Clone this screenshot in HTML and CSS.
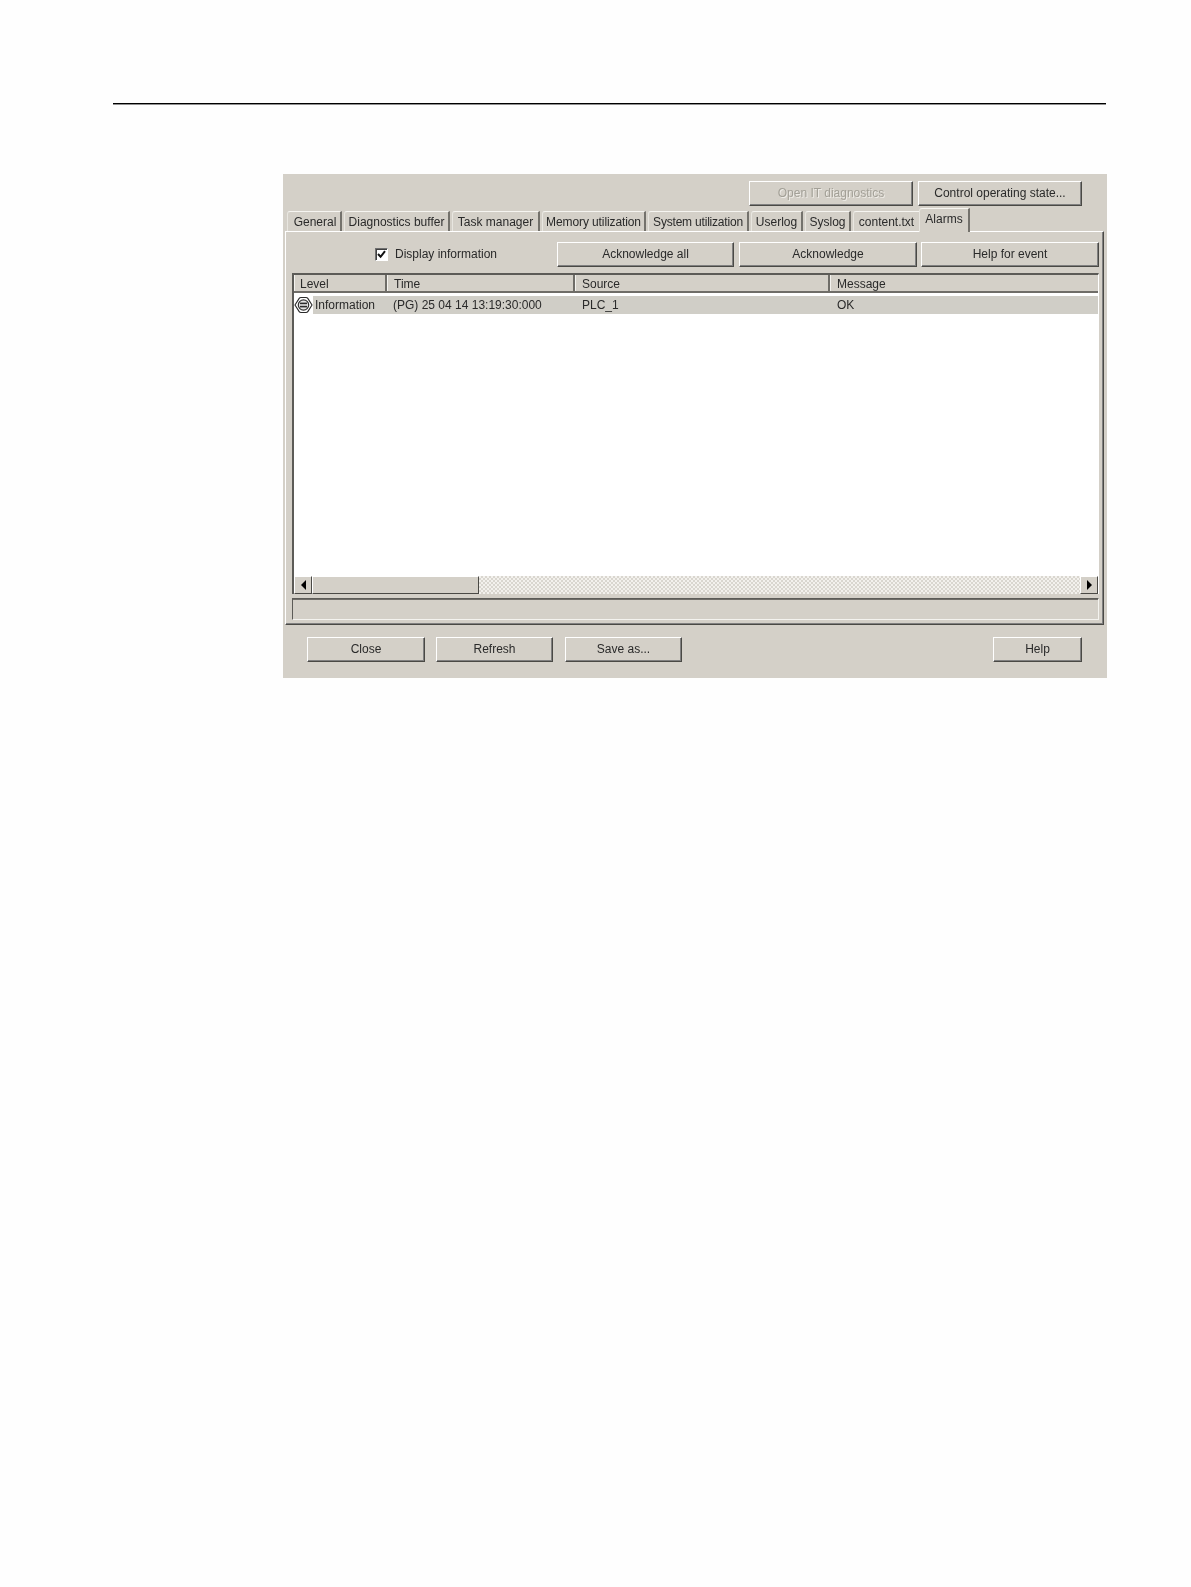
FILE: index.html
```html
<!DOCTYPE html>
<html lang="en">
<head>
<meta charset="utf-8">
<title>Alarms</title>
<link rel="stylesheet" href="styles.css">
</head>
<body>
<div class="rule"></div>
<div class="window">
  <div class="top-actions">
    <button class="btn btn-top btn-disabled">Open IT diagnostics</button>
    <button class="btn btn-top">Control operating state...</button>
  </div>
  <div class="tabs">
    <div class="tab tab-general">General</div>
    <div class="tab tab-diag">Diagnostics buffer</div>
    <div class="tab tab-task">Task manager</div>
    <div class="tab tab-memory">Memory utilization</div>
    <div class="tab tab-system">System utilization</div>
    <div class="tab tab-userlog">Userlog</div>
    <div class="tab tab-syslog">Syslog</div>
    <div class="tab tab-content">content.txt</div>
    <div class="tab tab-alarms">Alarms</div>
  </div>
  <div class="panel">
    <div class="panel-actions">
      <label class="check">
        <span class="check-box">
          <svg width="11" height="11" viewBox="0 0 11 11"><path d="M2 5 4.6 7.8 9 2.2" fill="none" stroke="#111" stroke-width="2"/></svg>
        </span>
        <span>Display information</span>
      </label>
      <button class="btn btn-ackall">Acknowledge all</button>
      <button class="btn btn-ack">Acknowledge</button>
      <button class="btn btn-ack">Help for event</button>
    </div>
    <div class="list">
      <div class="list-header">
        <div class="head-cell col-level">Level</div>
        <div class="head-cell col-time">Time</div>
        <div class="head-cell col-source">Source</div>
        <div class="head-cell col-message">Message</div>
      </div>
      <div class="list-row">
        <svg class="row-icon" width="19" height="18" viewBox="0 0 19 18">
          <path d="M1 9 5.2 2.4Q5.8 1.5 7 1.5H12Q13.2 1.5 13.8 2.4L18 9 13.8 15.6Q13.2 16.5 12 16.5H7Q5.8 16.5 5.2 15.6Z" fill="#fff" stroke="#2a2a2a" stroke-width="1.1"/>
          <circle cx="9.5" cy="9" r="5.2" fill="#e4e4e4" stroke="#333" stroke-width="1.2"/>
          <rect x="6" y="6.6" width="7" height="1.6" fill="#2a2a2a"/>
          <rect x="6" y="9.8" width="7" height="1.6" fill="#2a2a2a"/>
        </svg>
        <div class="row-body">
          <div class="row-cell row-level">Information</div>
          <div class="row-cell col-time row-time">(PG) 25 04 14 13:19:30:000</div>
          <div class="row-cell col-source">PLC_1</div>
          <div class="row-cell col-message">OK</div>
        </div>
      </div>
      <div class="list-fill"></div>
      <div class="scrollbar">
        <div class="scroll-btn"><span class="arrow-left"></span></div>
        <div class="scroll-thumb"></div>
        <div class="scroll-track"></div>
        <div class="scroll-btn"><span class="arrow-right"></span></div>
      </div>
    </div>
    <div class="status"></div>
  </div>
  <div class="bottom-actions">
    <button class="btn btn-close">Close</button>
    <button class="btn btn-wide">Refresh</button>
    <button class="btn btn-wide">Save as...</button>
    <button class="btn btn-help">Help</button>
  </div>
</div>
</body>
</html>
```
FILE: styles.css
```css
* { box-sizing: border-box; }
html, body { margin: 0; padding: 0; }
body {
  background: #fefefe;
  height: 1587px;
  overflow: hidden;
  font-family: "Liberation Sans", Arial, sans-serif;
  font-size: 12px;
  color: #2a2a2a;
}
.rule {
  height: 1px;
  margin: 103px 85px 0 113px;
  background: #000;
  box-shadow: 0 0.5px 0 #222;
}
.window {
  width: 824px;
  height: 504px;
  margin: 70px 0 0 283px;
  background: #d4d0c8;
  filter: blur(0.4px);
  display: flex;
  flex-direction: column;
}
.btn {
  display: block;
  height: 25px;
  padding: 0 0 2px;
  margin: 0;
  background: #d4d0c8;
  font: inherit;
  color: inherit;
  border: 1px solid;
  border-color: #fff #4a4945 #4a4945 #fff;
  box-shadow: inset -1px -1px 0 #808080;
}
.top-actions {
  display: flex;
  justify-content: flex-end;
  gap: 5px;
  padding: 7px 25px 0 0;
}
.btn-top { width: 164px; }
.btn-disabled { color: #a3a097; text-shadow: 1px 1px 0 #eeece7; }
.tabs {
  display: flex;
  align-items: flex-end;
  gap: 2px;
  height: 25px;
  padding-left: 4px;
}
.tab {
  height: 20px;
  line-height: 21px;
  text-align: center;
  white-space: nowrap;
  border-top: 1px solid #f6f5f1;
  border-left: 1px solid #e8e6e0;
  border-right: 2px solid #74726c;
  border-top-left-radius: 3px;
}
.tab-general { width: 55px; padding-left: 2px; }
.tab-diag { width: 106px; }
.tab-task { width: 88px; }
.tab-memory { width: 104px; letter-spacing: -0.1px; }
.tab-system { width: 101px; letter-spacing: -0.2px; }
.tab-userlog { width: 52px; }
.tab-syslog { width: 46px; }
.tab-content { width: 66px; border-right: none; }
.tab-alarms {
  width: 51px;
  height: 24px;
  line-height: 21px;
  margin-left: -2px;
  margin-bottom: -1px;
  background: #d4d0c8;
  position: relative;
  z-index: 1;
}
.panel {
  width: 819px;
  height: 394px;
  margin-left: 2px;
  padding: 10px 4px 0 6px;
  border: 1px solid;
  border-color: #fff #4a4945 #4a4945 #fff;
  box-shadow: inset -1px -1px 0 #808080;
  display: flex;
  flex-direction: column;
}
.panel-actions {
  display: flex;
  align-items: center;
  gap: 4px;
}
.check {
  display: flex;
  align-items: center;
  gap: 7px;
  margin-left: 83px;
  margin-right: auto;
  padding-bottom: 1px;
}
.check-box {
  width: 13px;
  height: 13px;
  display: flex;
  align-items: center;
  justify-content: center;
  background: #fff;
  border: 1px solid;
  border-color: #707070 #fff #fff #707070;
  box-shadow: inset 1px 1px 0 #404040;
}
.btn-ackall { width: 177px; margin-right: 1px; }
.btn-ack { width: 178px; }
.list {
  height: 321px;
  margin: 6px 0 0;
  background: #fff;
  border-top: 2px solid #5c5b57;
  border-left: 2px solid #5c5b57;
  border-right: 1px solid #fff;
  display: flex;
  flex-direction: column;
}
.list-header {
  display: flex;
  flex: none;
  height: 18px;
  background: #d4d0c8;
  border-bottom: 2px solid #6f6d68;
}
.head-cell {
  line-height: 18px;
  padding-left: 6px;
  border-right: 2px solid #6f6d68;
  border-left: 1px solid #f4f3ef;
}
.head-cell.col-level { padding-left: 5px; }
.col-level { width: 93px; flex: none; }
.col-time { width: 188px; flex: none; }
.col-source { width: 255px; flex: none; }
.col-message { flex: 1; border-right: none; }
.list-row {
  display: flex;
  flex: none;
  height: 18px;
  margin-top: 3px;
}
.row-icon { flex: none; }
.row-body {
  flex: 1;
  display: flex;
  background: #d0cec7;
}
.row-cell {
  line-height: 18px;
  padding-left: 7px;
}
.row-time { padding-left: 6px; }
.row-level {
  width: 74px;
  flex: none;
  padding-left: 2px;
}
.list-fill { flex: 1; }
.scrollbar {
  display: flex;
  flex: none;
  height: 18px;
}
.scroll-btn {
  width: 18px;
  flex: none;
  display: flex;
  align-items: center;
  justify-content: center;
  background: #d4d0c8;
  border: 1px solid;
  border-color: #fff #4a4945 #4a4945 #fff;
}
.scroll-thumb {
  width: 167px;
  flex: none;
  background: #d4d0c8;
  border: 1px solid;
  border-color: #fff #4a4945 #4a4945 #fff;
}
.scroll-track {
  flex: 1;
  background: repeating-conic-gradient(#d9d6cf 0 25%, #f3f1ed 0 50%) 0 0 / 4px 4px;
}
.arrow-left, .arrow-right {
  width: 0;
  height: 0;
  border-top: 5px solid transparent;
  border-bottom: 5px solid transparent;
}
.arrow-left { border-right: 5px solid #000; }
.arrow-right { border-left: 5px solid #000; }
.status {
  height: 22px;
  margin: 4px 0 0;
  border: 1px solid;
  border-color: #5c5b57 #f4f3ef #f4f3ef #5c5b57;
  box-shadow: inset 0 1px 0 #6f6d68;
}
.bottom-actions {
  display: flex;
  gap: 11px;
  padding: 12px 25px 0 24px;
}
.btn-close { width: 118px; }
.btn-wide { width: 117px; }
.btn-wide + .btn-wide { margin-left: 1px; }
.btn-help { width: 89px; margin-left: auto; }
```
